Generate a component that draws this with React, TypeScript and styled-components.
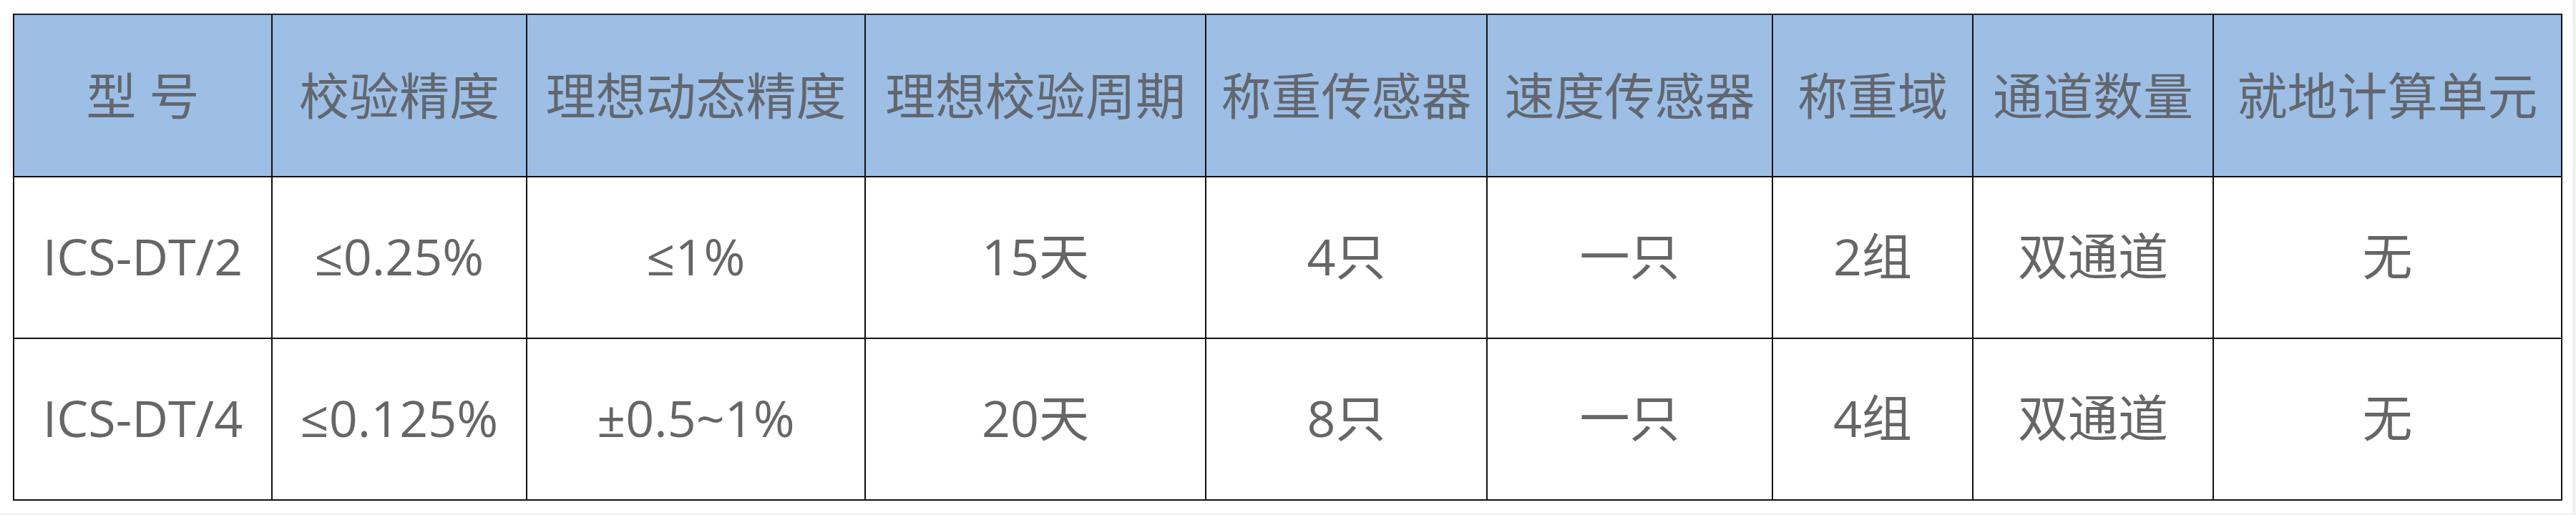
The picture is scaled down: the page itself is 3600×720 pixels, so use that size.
import styled, { createGlobalStyle } from 'styled-components'

const GlobalStyle = createGlobalStyle`
  html, body {
    margin: 0;
    padding: 0;
    background: #f1f1f1;
  }
`;

const columns = [361, 356, 473, 476, 393, 399, 280, 336, 487];

const headers = ['型 号', '校验精度', '理想动态精度', '理想校验周期', '称重传感器', '速度传感器', '称重域', '通道数量', '就地计算单元'];

const rows = [
  ['ICS-DT/2', '≤0.25%', '≤1%', '15天', '4只', '一只', '2组', '双通道', '无'],
  ['ICS-DT/4', '≤0.125%', '±0.5~1%', '20天', '8只', '一只', '4组', '双通道', '无'],
];

const Page = styled.div`
  width: 3595px;
  height: 718px;
  background: #fff;
  box-sizing: border-box;
  padding: 19px 0 0 18px;
`;

const Table = styled.div`
  display: grid;
  grid-template-columns: ${columns.map((w) => `${w}px`).join(' ')};
  grid-template-rows: 227px 226px 226px;
  width: max-content;
  border-top: 2px solid #1b2030;
  border-left: 2px solid #111;
`;

const Cell = styled.div<{ $head?: boolean }>`
  box-sizing: border-box;
  display: flex;
  align-items: center;
  justify-content: center;
  border-right: 2px solid #111;
  border-bottom: 2px solid #111;
  background: ${(p) => (p.$head ? '#9dbee5' : '#fff')};
  color: ${(p) => (p.$head ? '#62676f' : '#666')};
  font-family: "Open Sans", "Noto Sans CJK SC", sans-serif;
  font-size: 70px;
  white-space: pre;
  line-height: 1;
  padding-bottom: ${(p) => (p.$head ? '0' : '4px')};
`;

const App = () => {
  return (
    <>
      <GlobalStyle />
      <Page>
        <Table>
          {headers.map((h) => (
            <Cell $head key={h}>{h}</Cell>
          ))}
          {rows.map((row, i) =>
            row.map((v, j) => <Cell key={`${i}-${j}`}>{v}</Cell>)
          )}
        </Table>
      </Page>
    </>
  )
}

export default App
